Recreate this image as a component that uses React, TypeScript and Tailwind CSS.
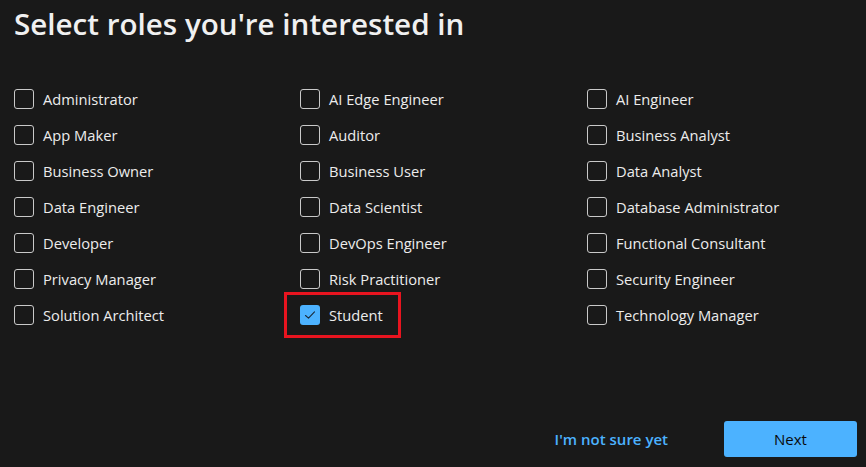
import React from 'react'

const roles = [
  'Administrator', 'AI Edge Engineer', 'AI Engineer',
  'App Maker', 'Auditor', 'Business Analyst',
  'Business Owner', 'Business User', 'Data Analyst',
  'Data Engineer', 'Data Scientist', 'Database Administrator',
  'Developer', 'DevOps Engineer', 'Functional Consultant',
  'Privacy Manager', 'Risk Practitioner', 'Security Engineer',
  'Solution Architect', 'Student', 'Technology Manager',
]

function Box({ checked }: { checked: boolean }) {
  if (checked) {
    return (
      <span className="w-5 h-5 rounded-[3px] bg-[#4cb2ff] flex items-center justify-center shrink-0">
        <svg width="12" height="12" viewBox="0 0 12 12" fill="none">
          <path d="M1.5 6.5 L4.5 9.2 L10.5 2.8" stroke="#1a2a3a" strokeWidth="1.1" strokeLinecap="round" strokeLinejoin="round" />
        </svg>
      </span>
    )
  }
  return <span className="w-5 h-5 rounded-[3px] border border-[#c9c9c9] shrink-0" />
}

export default function App() {
  return (
    <div className="w-[866px] h-[467px] bg-[#191919] text-[#ececec] overflow-hidden flex flex-col" style={{ fontFamily: '"Open Sans", "Noto Sans", sans-serif' }}>
      <h1 className="pl-[14px] pt-[2px] text-[29.6px] font-semibold text-[#f0f0f0] leading-[44px]">Select roles you're interested in</h1>

      <div className="grid grid-cols-[286px_287px_1fr] pl-[14px] mt-[35px]">
        {roles.map(r => {
          const checked = r === 'Student'
          return (
            <div key={r} className="relative flex items-center gap-[9px] h-[36px]">
              <Box checked={checked} />
              <span className="text-[14.7px] leading-5">{r}</span>
              {checked && <span className="absolute left-[-16px] top-[-5px] w-[117px] h-[46px] border-[3px] border-[#e8141f]" />}
            </div>
          )
        })}
      </div>

      <div className="mt-auto mb-[10px] flex items-center justify-end pr-[9px] gap-[56px]">
        <button className="text-[15px] font-semibold text-[#4cb2ff]">I'm not sure yet</button>
        <button className="w-[133px] h-[36px] rounded-[3px] bg-[#4cb2ff] text-[15px] text-[#0a0a0a]">Next</button>
      </div>
    </div>
  )
}
